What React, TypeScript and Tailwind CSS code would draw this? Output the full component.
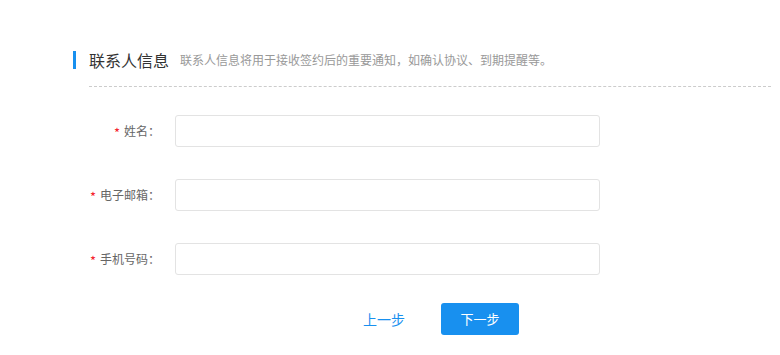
const FONT = "font-['Microsoft_YaHei','Noto_Sans_CJK_SC',sans-serif]";

const FIELDS = ["姓名：", "电子邮箱：", "手机号码："];

export default function App() {
  return (
    <div className={`min-h-[355px] w-[780px] bg-white pl-[73px] pr-[9px] pt-[51px] ${FONT}`}>
      {/* Section header */}
      <div className="flex h-[18px] items-center">
        <span className="h-[18px] w-[3px] bg-[#1890ef]" />
        <span className="ml-[13px] text-[16px] leading-[18px] text-[#333]">联系人信息</span>
        <span className="ml-[11px] text-[12px] leading-[18px] text-[#999]">
          联系人信息将用于接收签约后的重要通知，如确认协议、到期提醒等。
        </span>
      </div>
      <div className="ml-[16px] mt-[17px] border-t border-dashed border-[#cccccc]" />

      {/* Form */}
      <div className="mt-[28px] flex flex-col gap-[32px]">
        {FIELDS.map((label) => (
          <div key={label} className="flex h-[32px] items-center">
            <label className="flex w-[87px] items-center justify-end text-[12px] text-[#666]">
              <span className="mr-[4px] mt-[3px] text-[13px] text-[#f5222d]">*</span>
              {label}
            </label>
            <input
              type="text"
              className="ml-[15px] h-[32px] w-[425px] rounded-[3px] border border-[#e3e3e3] bg-white px-2 text-[12px] outline-none"
            />
          </div>
        ))}
      </div>

      {/* Actions */}
      <div className="mt-[28px] flex items-center gap-[18px] pl-[272px]">
        <button type="button" className="h-[32px] w-[78px] rounded-[3px] text-[14px] text-[#1890ef]">
          上一步
        </button>
        <button type="button" className="h-[32px] w-[78px] rounded-[3px] bg-[#1890ef] text-[13px] text-white">
          下一步
        </button>
      </div>
    </div>
  );
}
